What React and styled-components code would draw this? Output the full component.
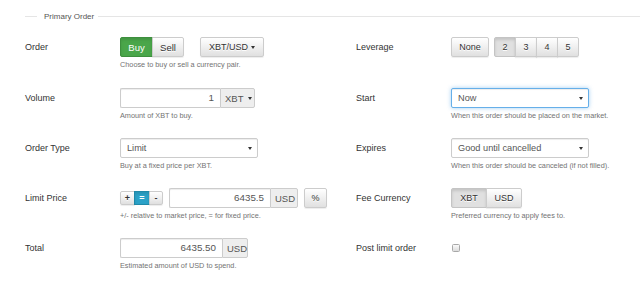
import React from 'react';
import styled, { createGlobalStyle, css } from 'styled-components';

const GlobalStyle = createGlobalStyle`
  html, body { margin: 0; padding: 0; background: #fff; }
  body { font-family: "Liberation Sans", Arial, sans-serif; color: #333; }
  * { box-sizing: border-box; }
`;

const Page = styled.div`
  width: 640px;
  height: 295px;
  overflow: hidden;
  padding-left: 25px;
`;

const Legend = styled.div`
  display: flex;
  align-items: center;
  height: 32px;
  font-size: 8px;
  color: #555;
  &::before {
    content: "";
    width: 12px;
    height: 1px;
    background: #e5e5e5;
    margin-right: 7px;
  }
  &::after {
    content: "";
    flex: 1;
    height: 1px;
    background: #e5e5e5;
    margin-left: 4px;
  }
`;

const FormGrid = styled.div`
  display: grid;
  grid-template-columns: 331px 1fr;
  grid-template-rows: 51px repeat(4, 50px);
  grid-auto-flow: row;
  margin-top: 5px;
`;

const Group = styled.div`
  display: flex;
  align-items: flex-start;
`;

const Label = styled.div`
  width: 95px;
  flex: none;
  line-height: 20px;
  font-size: 9px;
  color: #333;
`;

const Control = styled.div`
  display: flex;
  flex-direction: column;
`;

const ControlRow = styled.div`
  display: flex;
  align-items: center;
  height: 20px;
`;

const Help = styled.div`
  margin-top: 3px;
  font-size: 7.3px;
  line-height: 10px;
  color: #737373;
  white-space: nowrap;
`;

const variants = {
  default: css`
    color: #333;
    border-color: #ccc;
    background: linear-gradient(#fff, #e0e0e0);
    text-shadow: 0 1px 0 #fff;
    box-shadow: inset 0 1px 0 rgba(255,255,255,.15), 0 1px 1px rgba(0,0,0,.075);
  `,
  active: css`
    color: #333;
    border-color: #c4c4c4;
    background: #e0e0e0;
    text-shadow: 0 1px 0 #fff;
    box-shadow: inset 0 2px 3px rgba(0,0,0,.125);
  `,
  success: css`
    color: #fff;
    border-color: #3e8f3e;
    background: #4aa64a;
    box-shadow: inset 0 2px 3px rgba(0,0,0,.1);
  `,
  info: css`
    color: #fff;
    border-color: #2089a8;
    background: #2ba2c8;
    box-shadow: inset 0 2px 3px rgba(0,0,0,.1);
  `,
};

const Btn = styled.button`
  display: inline-flex;
  align-items: center;
  justify-content: center;
  gap: 3px;
  height: ${p => p.$h || 20}px;
  width: ${p => (p.$w ? `${p.$w}px` : 'auto')};
  padding: 0 ${p => (p.$px ?? 7)}px;
  margin: 0 0 0 ${p => p.$ml || 0}px;
  font: ${p => p.$fs || 9}px "Liberation Sans", Arial, sans-serif;
  font-weight: ${p => (p.$bold ? 700 : 400)};
  border: 1px solid;
  border-radius: 2px;
  cursor: pointer;
  ${p => variants[p.$variant || 'default']}
`;

const BtnGroup = styled.div`
  display: inline-flex;
  margin-left: ${p => p.$ml || 0}px;
  & > * { border-radius: 0; }
  & > * + * { margin-left: -1px; }
  & > *:first-child { border-radius: 2px 0 0 2px; }
  & > *:last-child { border-radius: 0 2px 2px 0; }
`;

const Caret = styled.span`
  display: inline-block;
  width: 0;
  height: 0;
  border-left: 2.5px solid transparent;
  border-right: 2.5px solid transparent;
  border-top: 3px solid ${p => p.$color || '#333'};
`;

const InputGroup = styled.div`
  display: inline-flex;
  height: 20px;
  margin-left: ${p => p.$ml || 0}px;
`;

const Input = styled.div`
  width: ${p => p.$w}px;
  height: 20px;
  border: 1px solid #ccc;
  border-radius: 2px 0 0 2px;
  border-right: none;
  box-shadow: inset 0 1px 1px rgba(0,0,0,.075);
  font-size: 9.8px;
  line-height: 18px;
  text-align: right;
  padding: 0 6px;
  color: #555;
`;

const Addon = styled.div`
  display: flex;
  align-items: center;
  gap: 5px;
  width: ${p => p.$w}px;
  height: 20px;
  padding: 0 4px;
  border: 1px solid #ccc;
  border-radius: 0 2px 2px 0;
  background: #eee;
  font-size: 9.5px;
  color: #555;
`;

const Select = styled.div`
  display: flex;
  align-items: center;
  justify-content: space-between;
  width: 138px;
  height: 20px;
  padding: 0 5px 0 6px;
  border: 1px solid ${p => (p.$focus ? '#66afe9' : '#ccc')};
  border-radius: 2px;
  font-size: 9.2px;
  color: #555;
  background: #fff;
  box-shadow: ${p =>
    p.$focus
      ? 'inset 0 1px 1px rgba(0,0,0,.075), 0 0 4px rgba(102,175,233,.6)'
      : 'inset 0 1px 1px rgba(0,0,0,.075)'};
`;

const Checkbox = styled.span`
  display: inline-block;
  width: 8px;
  height: 8px;
  margin-left: 1px;
  border: 1px solid #a8a8a8;
  border-radius: 1.5px;
  background: linear-gradient(#fafafa, #dcdcdc);
`;

const Field = ({ label, help, children }) => (
  <Group>
    <Label>{label}</Label>
    <Control>
      {children}
      {help && <Help>{help}</Help>}
    </Control>
  </Group>
);

export default function App() {
  return (
    <Page>
      <GlobalStyle />
      <Legend>Primary Order</Legend>
      <FormGrid>
        <Field label="Order" help="Choose to buy or sell a currency pair.">
          <ControlRow>
            <BtnGroup>
              <Btn $variant="success" $w={33} $fs={9.5}>Buy</Btn>
              <Btn $w={32} $fs={9.5}>Sell</Btn>
            </BtnGroup>
            <Btn $w={64} $ml={16}>XBT/USD <Caret /></Btn>
          </ControlRow>
        </Field>
        <Field label="Leverage">
          <ControlRow>
            <Btn $w={38}>None</Btn>
            <BtnGroup $ml={5}>
              <Btn $variant="active" $w={22}>2</Btn>
              <Btn $w={22}>3</Btn>
              <Btn $w={22}>4</Btn>
              <Btn $w={22}>5</Btn>
            </BtnGroup>
          </ControlRow>
        </Field>

        <Field label="Volume" help="Amount of XBT to buy.">
          <ControlRow>
            <InputGroup>
              <Input $w={100}>1</Input>
              <Addon $w={35}>XBT <Caret /></Addon>
            </InputGroup>
          </ControlRow>
        </Field>
        <Field label="Start" help="When this order should be placed on the market.">
          <ControlRow>
            <Select $focus>Now<Caret /></Select>
          </ControlRow>
        </Field>

        <Field label="Order Type" help="Buy at a fixed price per XBT.">
          <ControlRow>
            <Select>Limit<Caret /></Select>
          </ControlRow>
        </Field>
        <Field label="Expires" help="When this order should be canceled (if not filled).">
          <ControlRow>
            <Select>Good until cancelled<Caret /></Select>
          </ControlRow>
        </Field>

        <Field label="Limit Price" help="+/- relative to market price, = for fixed price.">
          <ControlRow>
            <BtnGroup>
              <Btn $h={14} $w={15} $px={0} $bold>+</Btn>
              <Btn $h={14} $w={16} $px={0} $bold $variant="info">=</Btn>
              <Btn $h={14} $w={14} $px={0} $bold>-</Btn>
            </BtnGroup>
            <InputGroup $ml={6}>
              <Input $w={101}>6435.5</Input>
              <Addon $w={28}>USD</Addon>
            </InputGroup>
            <Btn $w={23} $ml={6}>%</Btn>
          </ControlRow>
        </Field>
        <Field label="Fee Currency" help="Preferred currency to apply fees to.">
          <ControlRow>
            <BtnGroup>
              <Btn $variant="active" $w={36}>XBT</Btn>
              <Btn $w={36}>USD</Btn>
            </BtnGroup>
          </ControlRow>
        </Field>

        <Field label="Total" help="Estimated amount of USD to spend.">
          <ControlRow>
            <InputGroup>
              <Input $w={102}>6435.50</Input>
              <Addon $w={26}>USD</Addon>
            </InputGroup>
          </ControlRow>
        </Field>
        <Field label="Post limit order">
          <ControlRow>
            <Checkbox />
          </ControlRow>
        </Field>
      </FormGrid>
    </Page>
  );
}
